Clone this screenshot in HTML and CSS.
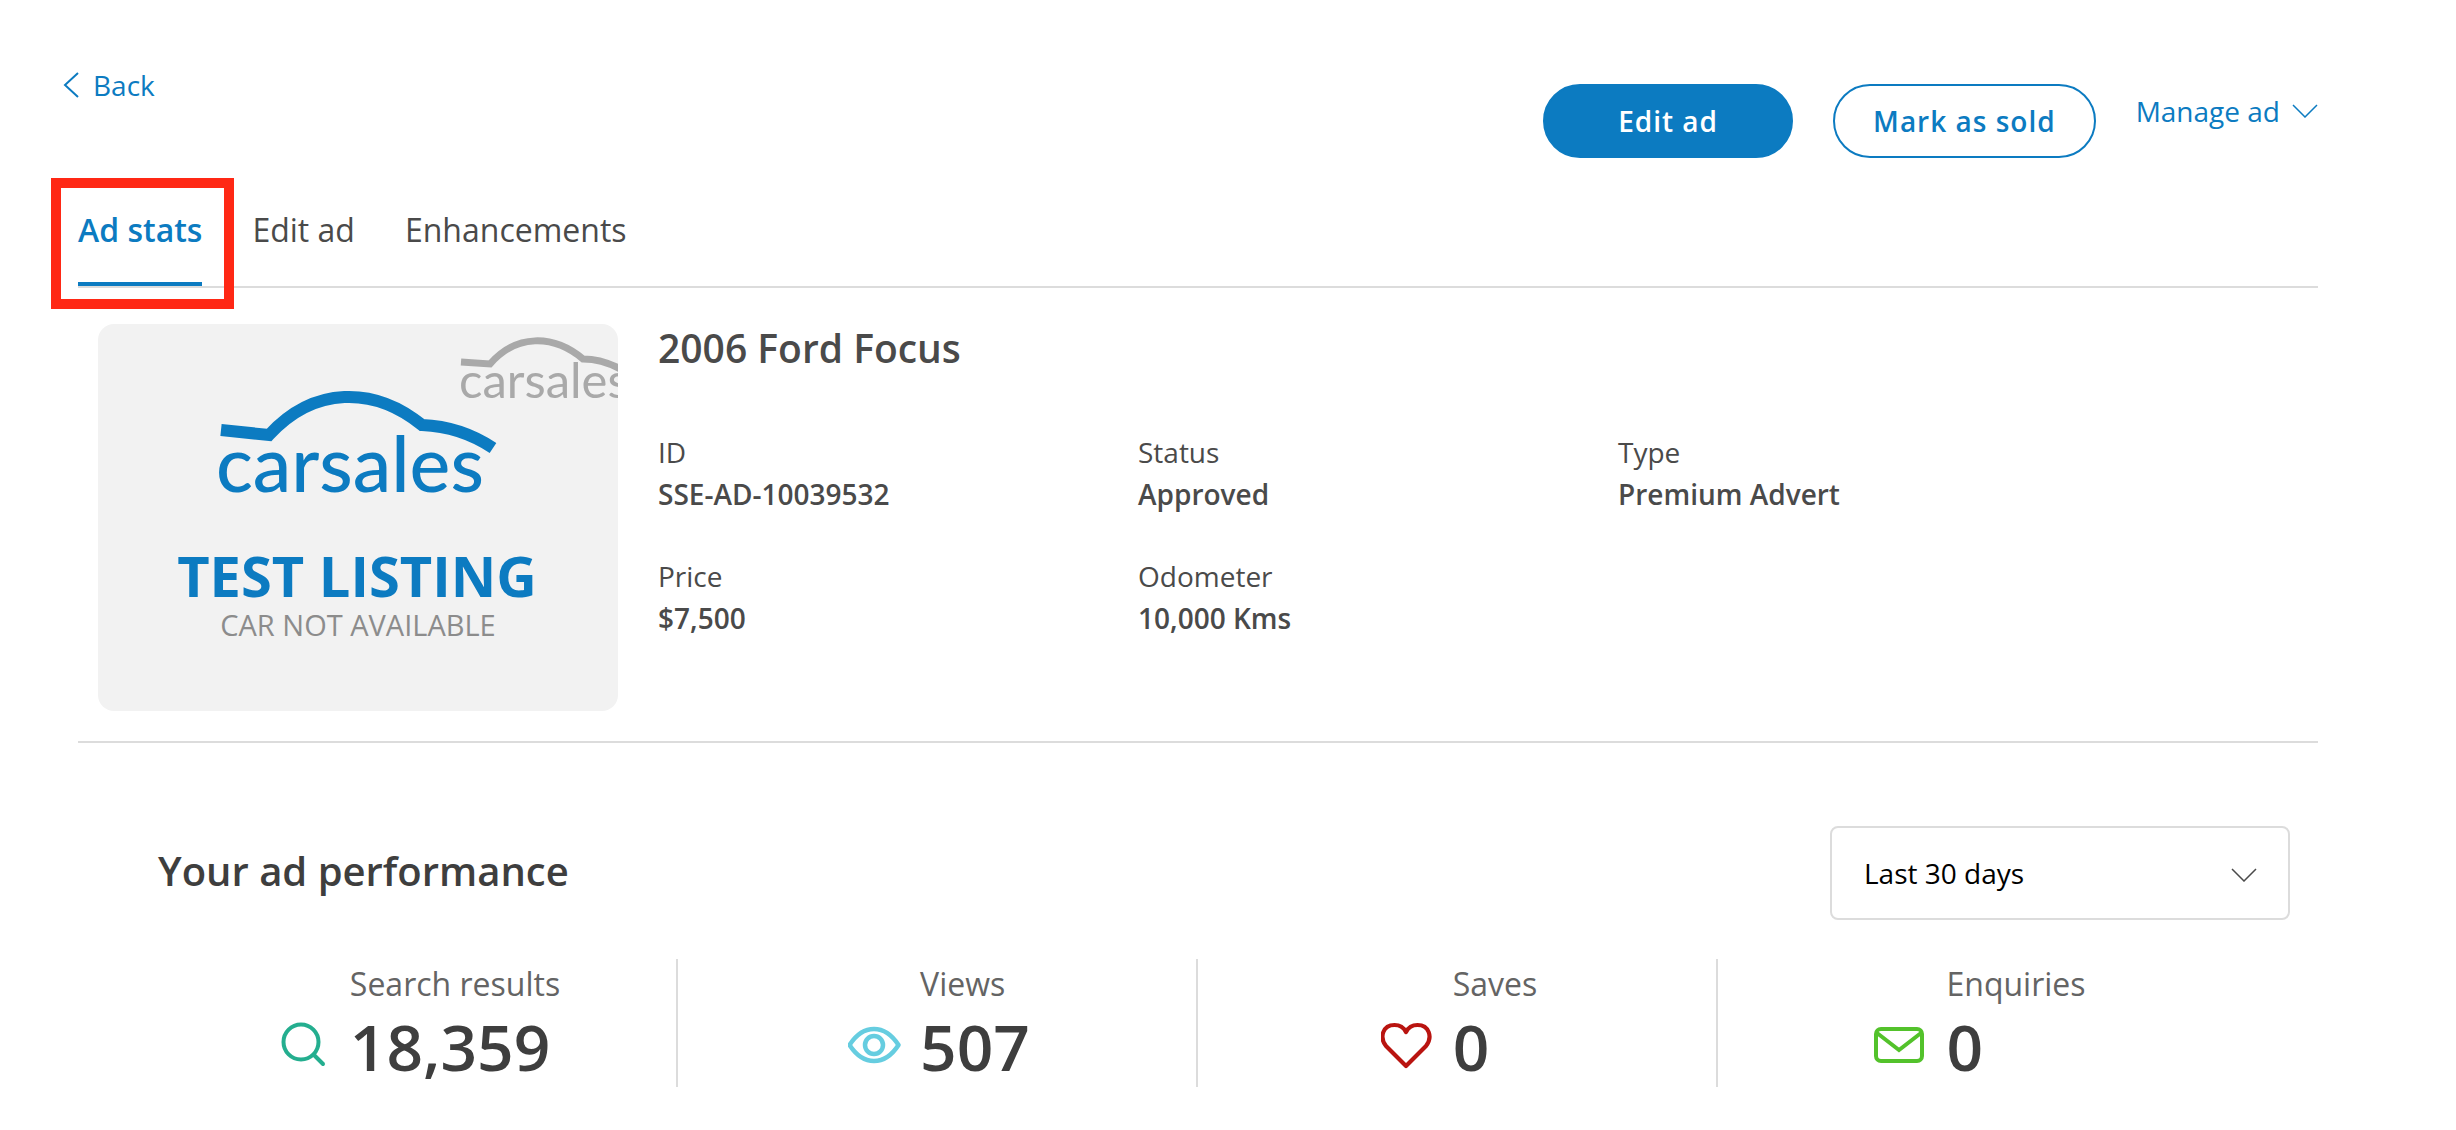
FILE: index.html
```html
<!DOCTYPE html>
<html lang="en">
<head>
<meta charset="utf-8">
<meta name="viewport" content="width=device-width, initial-scale=1">
<title>Ad stats</title>
<link rel="stylesheet" href="styles.css">
</head>
<body>
<header class="topbar">
  <a class="back" href="#">
    <svg width="16" height="26" viewBox="0 0 16 26" fill="none" stroke="currentColor" stroke-width="2"><path d="M15 1 2 13l13 12"/></svg>
    Back
  </a>
  <div class="actions">
    <button class="btn btn-primary" type="button">Edit ad</button>
    <button class="btn btn-outline" type="button">Mark as sold</button>
    <button class="manage" type="button">
      Manage ad
      <svg width="26" height="14" viewBox="0 0 26 14" fill="none" stroke="currentColor" stroke-width="1.5"><path d="m1 1 12 12L25 1"/></svg>
    </button>
  </div>
</header>

<main class="content">
  <nav class="tabs">
    <a class="tab tab-active" href="#">Ad stats</a>
    <a class="tab" href="#">Edit ad</a>
    <a class="tab" href="#">Enhancements</a>
  </nav>

  <section class="listing">
    <svg class="photo" viewBox="0 0 520 387" role="img" aria-label="Test listing, car not available">
      <rect width="520" height="387" fill="#f2f2f2"/>
      <path d="M363 38l29 2C418 10 455 10 485 35c15 0 29 5 41 12" fill="none" stroke="#a9a9a9" stroke-width="7"/>
      <text class="wordmark" x="361" y="74" font-size="49" fill="#a9a9a9">carsales</text>
      <path d="M123 106l48 5C216 62 276 62 324 101c26 1 50 9 71 23" fill="none" stroke="#0c7bc1" stroke-width="12"/>
      <text class="wordmark wordmark-main" x="118" y="168" font-size="77" fill="#0c7bc1">carsales</text>
      <text x="259" y="273" font-size="56" font-weight="700" text-anchor="middle" fill="#0c7bc1">TEST LISTING</text>
      <text x="260" y="312" font-size="29" text-anchor="middle" fill="#8c8c8c">CAR NOT AVAILABLE</text>
    </svg>
    <div class="details">
      <h1 class="title title-listing">2006 Ford Focus</h1>
      <dl class="facts">
        <div><dt>ID</dt><dd>SSE-AD-10039532</dd></div>
        <div><dt>Status</dt><dd>Approved</dd></div>
        <div><dt>Type</dt><dd>Premium Advert</dd></div>
        <div><dt>Price</dt><dd>$7,500</dd></div>
        <div><dt>Odometer</dt><dd>10,000 Kms</dd></div>
      </dl>
    </div>
  </section>

  <section class="performance">
    <div class="performance-head">
      <h2 class="title title-dark">Your ad performance</h2>
      <div class="period">
        <select class="period-select" aria-label="Period">
          <option>Last 30 days</option>
        </select>
        <svg class="period-arrow" width="26" height="14" viewBox="0 0 26 14" fill="none" stroke="#4a4a4a" stroke-width="1.5"><path d="m1 1 12 12L25 1"/></svg>
      </div>
    </div>
    <div class="stats">
      <div class="stat">
        <svg class="stat-icon" viewBox="0 0 56 56" fill="none" stroke="#24ae8f" stroke-width="4" stroke-linecap="round"><circle cx="23" cy="25" r="17.500"/><path d="m36 38 9 9"/></svg>
        <div><div class="stat-label">Search results</div><div class="stat-value">18,359</div></div>
      </div>
      <div class="stat">
        <svg class="stat-icon" viewBox="0 0 56 56" fill="none" stroke="#66cde0" stroke-width="4.500"><path d="M1.500 28C8 18 17 12 26 12s18 6 24.500 16C44 38 35 44 26 44S8 38 1.500 28z" stroke-linejoin="round"/><circle cx="26" cy="28" r="9"/></svg>
        <div><div class="stat-label">Views</div><div class="stat-value">507</div></div>
      </div>
      <div class="stat">
        <svg class="stat-icon" viewBox="0 0 56 56" fill="none" stroke="#b91410" stroke-width="4.200"><path d="M25 49 5 29C-2 20 2 8 13.500 8 19 8 23 11 25 15c2-4 6-7 11.500-7C48 8 52 20 45 29z" stroke-linejoin="round"/></svg>
        <div><div class="stat-label">Saves</div><div class="stat-value">0</div></div>
      </div>
      <div class="stat">
        <svg class="stat-icon" viewBox="0 0 56 56" fill="none" stroke="#53c22b" stroke-width="4"><rect x="2" y="12" width="46" height="32" rx="5"/><path d="m3 16 22 17 22-17"/></svg>
        <div><div class="stat-label">Enquiries</div><div class="stat-value">0</div></div>
      </div>
    </div>
  </section>
</main>
</body>
</html>
```
FILE: styles.css
```css
* { box-sizing: border-box; }

body {
  margin: 0;
  background: #fff;
  color: #4a4a4a;
  font: 400 28px/42px "Open Sans", "Noto Sans", sans-serif;
}

h1, h2, dl, dd { margin: 0; }
button, select { font: inherit; }
a { text-decoration: none; }

.topbar {
  display: flex;
  justify-content: space-between;
  align-items: flex-start;
  padding: 64px 138px 0 63px;
}

.back, .manage {
  display: flex;
  align-items: center;
  color: #0c7bc1;
}
.back { gap: 14px; }

.actions {
  display: flex;
  align-items: flex-start;
  gap: 40px;
  padding-top: 20px;
}

.btn {
  height: 74px;
  padding: 0 38px;
  border: 2px solid #0c7bc1;
  border-radius: 37px;
  font-weight: 600;
  letter-spacing: 1px;
}
.btn-primary { min-width: 250px; background: #0c7bc1; color: #fff; }
.btn-outline { background: #fff; color: #0c7bc1; }

.manage {
  gap: 12px;
  padding: 6px 0 0;
  border: 0;
  background: none;
}

.content { padding: 50px 138px 0 78px; }

.tabs {
  display: flex;
  gap: 50px;
  border-bottom: 2px solid #dcdcdc;
  font-size: 32px;
  line-height: 44px;
}
.tab {
  position: relative;
  padding-bottom: 30px;
  border-bottom: 4px solid transparent;
  color: #4a4a4a;
}
.tab-active {
  border-color: #0c7bc1;
  color: #0c7bc1;
  font-weight: 600;
}
.tab-active::after {
  content: "";
  position: absolute;
  inset: -30px -32px -27px -27px;
  border: 10px solid #ff2815;
}

.listing {
  display: flex;
  gap: 40px;
  padding: 36px 20px 30px;
  border-bottom: 2px solid #dcdcdc;
}
.photo {
  flex: none;
  width: 520px;
  height: 387px;
  border-radius: 16px;
}
.wordmark { font-family: Lato, sans-serif; font-weight: 400; }
.wordmark-main { font-weight: 500; }
.details { flex: 1; }

.title {
  font-size: 40px;
  line-height: 48px;
  font-weight: 600;
}
.title-listing { font-size: 39px; }
.title-dark { color: #3e3e3e; }

.facts {
  display: grid;
  grid-template-columns: repeat(auto-fill, 480px);
  row-gap: 40px;
  margin-top: 59px;
}
.facts dd { font-weight: 600; }

.performance { padding-top: 83px; }
.performance-head {
  display: flex;
  justify-content: space-between;
  align-items: flex-start;
  padding: 0 28px 0 80px;
}
.performance-head .title { padding-top: 21px; }
.period { position: relative; }
.period-select {
  width: 460px;
  height: 94px;
  padding: 0 32px;
  border: 2px solid #dcdcdc;
  border-radius: 8px;
  background: #fff;
  color: #000;
  appearance: none;
}
.period-arrow {
  position: absolute;
  top: 42px;
  right: 33px;
  pointer-events: none;
}

.stats {
  display: grid;
  grid-template-columns: repeat(4, 1fr);
  padding: 39px 80px 0;
}
.stat {
  display: flex;
  justify-content: center;
  align-items: flex-end;
  gap: 16px;
  height: 128px;
  padding-left: 4px;
  border-right: 2px solid #dcdcdc;
}
.stat:last-child { border-right: 0; }
.stat-icon { width: 56px; height: 56px; margin-bottom: 14px; }
.stat-label { color: #646464; font-size: 32px; line-height: 46px; }
.stat-value { color: #3e3e3e; font-size: 64px; font-weight: 600; line-height: 80px; }
```
